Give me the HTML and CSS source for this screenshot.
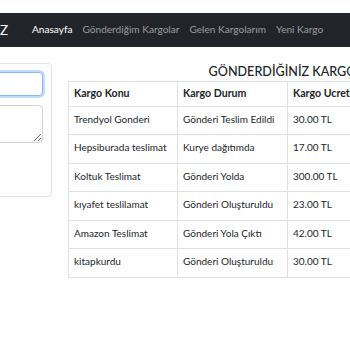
FILE: index.html
```html
<!doctype html>
<html lang="tr">
<head>
	<meta charset="utf-8" />
	<title>Kargo Takip</title>
	<link rel="stylesheet" href="styles.css">
</head>
<body>
	<!-- ust menu -->
	<nav class="navbar">
		<span class="brand">Z</span>
		<ul class="nav-links">
			<li class="active"><a href="#">Anasayfa</a></li>
			<li><a href="#">Gönderdiğim Kargolar</a></li>
			<li><a href="#">Gelen Kargolarım</a></li>
			<li><a href="#">Yeni Kargo</a></li>
		</ul>
	</nav>
	<div class="content">
		<!-- arama kutusu -->
		<div class="side-card">
			<input class="field field-focus" type="text" />
			<textarea class="field field-area"></textarea>
		</div>
		<!-- kargo listesi -->
		<div class="list">
			<h4 class="list-title">GÖNDERDİĞİNİZ KARGOLAR</h4>
			<table class="kargo-table">
				<thead>
					<tr>
						<th class="c1">Kargo Konu</th>
						<th class="c2">Kargo Durum</th>
						<th>Kargo Ucret</th>
					</tr>
				</thead>
				<tbody>
					<tr><td>Trendyol Gonderi</td><td>Gönderi Teslim Edildi</td><td>30.00 TL</td></tr>
					<tr><td>Hepsiburada teslimat</td><td>Kurye dağıtımda</td><td>17.00 TL</td></tr>
					<tr><td>Koltuk Teslimat</td><td>Gönderi Yolda</td><td>300.00 TL</td></tr>
					<tr><td>kıyafet teslilamat</td><td>Gönderi Oluşturuldu</td><td>23.00 TL</td></tr>
					<tr><td>Amazon Teslimat</td><td>Gönderi Yola Çıktı</td><td>42.00 TL</td></tr>
					<tr><td>kitapkurdu</td><td>Gönderi Oluşturuldu</td><td>30.00 TL</td></tr>
				</tbody>
			</table>
		</div>
	</div>
</body>
</html>
```

FILE: styles.css
```css
* {
	margin: 0;
	padding: 0;
	box-sizing: border-box;
}
html {
	overflow: hidden;
}
body {
	padding-top: 13px;
	font-family: Lato, "Noto Sans", sans-serif;
	font-size: 10px;
	line-height: 1.5;
	color: #212529;
	background-color: #fff;
}
ul {
	list-style-type: none;
}
a {
	text-decoration: none;
}
/* ust menu */
.navbar {
	height: 34px;
	background-color: #212529;
	display: flex;
	align-items: center;
}
.brand {
	width: 27px;
	font-size: 13.5px;
	color: #fff;
}
.nav-links {
	display: flex;
	font-size: 10.1px;
}
.nav-links a {
	display: block;
	padding: 0 5px;
	color: rgba(255, 255, 255, .55);
	white-space: nowrap;
}
.nav-links .active a {
	color: #fff;
}
/* icerik */
.content {
	display: flex;
	align-items: flex-start;
	gap: 16px;
	margin-left: -20px;
	margin-top: 16px;
}
.side-card {
	flex: none;
	width: 72px;
	height: 134px;
	border: 1px solid #dfe2e6;
	border-radius: 4px;
	padding: 8px 8px 0 0;
	display: flex;
	flex-direction: column;
	gap: 9px;
}
.field {
	display: block;
	width: 100%;
	border: 1px solid #ced4da;
	border-radius: 4px;
	font: inherit;
}
.field-focus {
	height: 24px;
	border-color: #86b7fe;
	box-shadow: 0 0 0 2px rgba(13, 110, 253, .25);
	outline: none;
}
.field-area {
	height: 38px;
	resize: vertical;
}
.list {
	flex: none;
	width: 452px;
}
.list-title {
	text-align: center;
	font-size: 12.6px;
	font-weight: 500;
	line-height: 1.2;
	height: 16px;
	margin-top: 1px;
	margin-bottom: 1px;
}
.kargo-table {
	width: 100%;
	border-collapse: collapse;
}
.kargo-table th,
.kargo-table td {
	border: 1px solid #dee2e6;
	text-align: left;
	padding: 5px 5px 7.5px;
	white-space: nowrap;
}
.kargo-table th {
	padding: 4px 5px;
	font-size: 10.6px;
	font-weight: 700;
}
.kargo-table .c1 {
	width: 109px;
}
.kargo-table .c2 {
	width: 110px;
}
```
